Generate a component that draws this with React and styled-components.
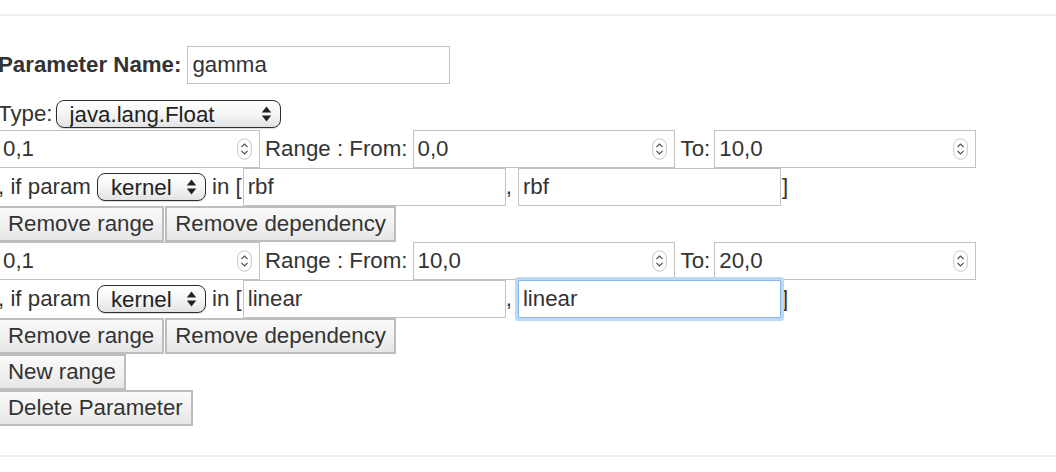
import React from "react";
import styled, { createGlobalStyle, css } from "styled-components";

const Global = createGlobalStyle`
  html, body { margin: 0; padding: 0; background: #fff; }
  body {
    font-family: "Liberation Sans", Arial, Helvetica, sans-serif;
    font-size: 22.3px;
    color: #333;
    overflow: hidden;
  }
  * { box-sizing: border-box; }
`;

const Page = styled.div`
  width: 1060px;
  margin-left: -2px;
`;

const Rule = styled.div`
  height: 2px;
  background: #eeeeee;
  margin-top: ${(p) => p.$top}px;
`;

const Form = styled.form`
  display: flex;
  flex-direction: column;
  align-items: flex-start;
  padding-top: 30px;
`;

const Row = styled.div`
  display: flex;
  align-items: center;
  height: ${(p) => p.$h}px;
  margin-top: ${(p) => p.$mt || 0}px;
  white-space: pre;
`;

const Label = styled.span`
  font-weight: ${(p) => (p.$bold ? 700 : 400)};
  padding: 0 ${(p) => (p.$pr ?? 6)}px 0 ${(p) => (p.$pl ?? 0)}px;
  line-height: 1;
`;

const inputBase = css`
  font: inherit;
  color: #333;
  height: 38px;
  width: ${(p) => p.$w || 263}px;
  border: 1px solid #c2c2c2;
  background: #fff;
  padding: 0 4px;
  margin: 0;
  outline: none;
  border-radius: 0;
`;

const TextInput = styled.input`
  ${inputBase};
  ${(p) =>
    p.$focused &&
    css`
      border-color: #86b6e8;
      box-shadow: 0 0 0 3px #bcd9f6;
      border-radius: 1px;
      position: relative;
      z-index: 1;
    `}
`;

const NumberWrap = styled.div`
  position: relative;
  width: ${(p) => p.$w || 262}px;
  height: 38px;
`;

const NumberInput = styled.input`
  ${inputBase};
  width: 100%;
`;

const Spinner = styled.svg`
  position: absolute;
  right: 8px;
  top: 8px;
  width: 15px;
  height: 22px;
  pointer-events: none;
`;

const NumberField = ({ value, w }) => (
  <NumberWrap $w={w}>
    <NumberInput defaultValue={value} readOnly />
    <Spinner viewBox="0 0 15 22">
      <rect x="0.75" y="0.75" width="13.5" height="20.5" rx="6.75" fill="#fff" stroke="#c6c6c6" strokeWidth="1" />
      <path d="M4.5 9 L7.5 6 L10.5 9" fill="none" stroke="#555" strokeWidth="1.2" />
      <path d="M4.5 13 L7.5 16 L10.5 13" fill="none" stroke="#555" strokeWidth="1.2" />
    </Spinner>
  </NumberWrap>
);

const SelectWrap = styled.div`
  position: relative;
  width: ${(p) => p.$w}px;
  height: 28px;
`;

const SelectBox = styled.select`
  appearance: none;
  -webkit-appearance: none;
  font: inherit;
  color: #222;
  width: 100%;
  height: 100%;
  margin: 0;
  padding: 0 0 0 13px;
  border: 1.5px solid #2e2e2e;
  border-radius: 8px;
  background: linear-gradient(#ffffff, #f4f4f4 55%, #e2e2e2);
  box-shadow: 0 1px 1px rgba(0, 0, 0, 0.15);
  line-height: 25px;
  outline: none;
`;

const SelectArrows = styled.svg`
  position: absolute;
  right: 9px;
  top: 6px;
  width: 11px;
  height: 16px;
  pointer-events: none;
`;

const Select = ({ w, value }) => (
  <SelectWrap $w={w}>
    <SelectBox defaultValue={value}>
      <option>{value}</option>
    </SelectBox>
    <SelectArrows viewBox="0 0 11 16">
      <path d="M5.5 0.5 L10.2 6.5 L0.8 6.5 Z" fill="#222" />
      <path d="M5.5 15.5 L10.2 9.5 L0.8 9.5 Z" fill="#222" />
    </SelectArrows>
  </SelectWrap>
);

const ButtonRow = styled.div`
  display: flex;
  gap: 1px;
`;

const Button = styled.button`
  font: inherit;
  color: #333;
  height: 36px;
  margin: 0;
  padding: 0 8px;
  border: 2px solid #bdbdbd;
  border-radius: 0;
  background: linear-gradient(#fafafa, #f2f2f2 50%, #e6e6e6);
  line-height: 1;
  cursor: pointer;
`;

const RangeBlock = ({ step, from, to, dep1, dep2, focused }) => (
  <>
    <Row $h={38}>
      <NumberField value={step} />
      <Label $pl={5} $pr={5}>Range : From:</Label>
      <NumberField value={from} />
      <Label $pl={6} $pr={4}>To:</Label>
      <NumberField value={to} />
    </Row>
    <Row $h={38}>
      <Label $pr={6}>, if param</Label>
      <Select w={109} value="kernel" />
      <Label $pl={6} $pr={1}>in [</Label>
      <TextInput $w={263} defaultValue={dep1} />
      <Label $pr={6}>,</Label>
      <TextInput $w={263} defaultValue={dep2} $focused={focused} />
      <Label $pl={1}>]</Label>
    </Row>
    <ButtonRow>
      <Button type="button">Remove range</Button>
      <Button type="button">Remove dependency</Button>
    </ButtonRow>
  </>
);

export default function App() {
  return (
    <Page>
      <Global />
      <Rule $top={14} />
      <Form onSubmit={(e) => e.preventDefault()}>
        <Row $h={38}>
          <Label $bold>Parameter Name:</Label>
          <TextInput $w={263} defaultValue="gamma" />
        </Row>
        <Row $h={28} $mt={16}>
          <Label $pr={3}>Type:</Label>
          <Select w={225} value="java.lang.Float" />
        </Row>
        <Row $h={2} />
        <RangeBlock step="0,1" from="0,0" to="10,0" dep1="rbf" dep2="rbf" />
        <RangeBlock step="0,1" from="10,0" to="20,0" dep1="linear" dep2="linear" focused />
        <Button type="button">New range</Button>
        <Button type="button">Delete Parameter</Button>
      </Form>
      <Rule $top={29} />
    </Page>
  );
}
